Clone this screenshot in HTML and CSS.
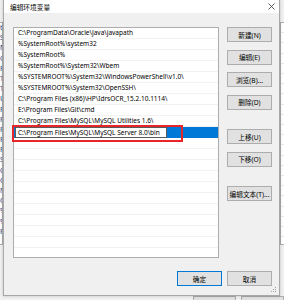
FILE: index.html
```html
<!DOCTYPE html>
<html lang="zh-CN">

<head>
    <meta charset="UTF-8">
    <meta name="viewport" content="width=device-width, initial-scale=1.0">
    <title>编辑环境变量</title>
    <link rel="stylesheet" href="styles.css">
</head>

<body>

    <!-- window behind the dialog, only its edges show -->
    <div class="backwin">
        <div class="back-top">
            <div class="back-list">
                <div>t</div>
                <div>S</div>
                <div>M</div>
                <div>O</div>
                <div>F</div>
                <div>T</div>
                <div>T</div>
                <div>U</div>
                <div>P</div>
                <div>P</div>
                <div>P</div>
                <div>P</div>
                <div>F</div>
                <div>S</div>
                <div>C</div>
                <div>O</div>
                <div>N</div>
                <div>O</div>
                <div>%</div>
                <div>%</div>
                <div>F</div>
            </div>
            <div class="back-list right"></div>
        </div>
        <div class="back-buttons">
            <span class="back-btn"></span>
            <span class="back-btn"></span>
        </div>
    </div>

    <div class="dialog">
        <div class="titlebar">
            <span class="title">编辑环境变量</span>
            <svg class="close" width="7" height="7" viewBox="0 0 7 7">
                <path d="M0.5 0.5 L6.5 6.5 M6.5 0.5 L0.5 6.5" stroke="#333" stroke-width="0.8" fill="none" />
            </svg>
        </div>
        <div class="body">
            <div class="main">
                <div class="list">
                    <div class="row">C:\ProgramData\Oracle\Java\javapath</div>
                    <div class="row">%SystemRoot%\system32</div>
                    <div class="row">%SystemRoot%</div>
                    <div class="row">%SystemRoot%\System32\Wbem</div>
                    <div class="row">%SYSTEMROOT%\System32\WindowsPowerShell\v1.0\</div>
                    <div class="row">%SYSTEMROOT%\System32\OpenSSH\</div>
                    <div class="row">C:\Program Files (x86)\HP\IdrsOCR_15.2.10.1114\</div>
                    <div class="row">E:\Program Files\Git\cmd</div>
                    <div class="row">C:\Program Files\MySQL\MySQL Utilities 1.6\</div>
                    <div class="row selected"><span class="edit">C:\Program Files\MySQL\MySQL Server 8.0\bin</span></div>
                    <div class="row"></div>
                    <div class="row"></div>
                    <div class="row"></div>
                    <div class="row"></div>
                    <div class="row"></div>
                    <div class="row"></div>
                    <div class="row"></div>
                    <div class="row"></div>
                    <div class="row"></div>
                    <div class="row"></div>
                    <div class="row"></div>
                </div>
                <div class="buttons">
                    <button class="btn">新建(N)</button>
                    <button class="btn">编辑(E)</button>
                    <button class="btn">浏览(B)...</button>
                    <button class="btn">删除(D)</button>
                    <button class="btn sep">上移(U)</button>
                    <button class="btn">下移(O)</button>
                    <button class="btn sep">编辑文本(T)...</button>
                </div>
            </div>
            <div class="footer">
                <button class="btn default">确定</button>
                <button class="btn">取消</button>
            </div>
        </div>
        <svg class="grip" width="6" height="6" viewBox="0 0 6 6">
            <rect x="4" y="0" width="1" height="1" fill="#a0a0a0" />
            <rect x="2" y="2" width="1" height="1" fill="#a0a0a0" />
            <rect x="4" y="2" width="1" height="1" fill="#a0a0a0" />
            <rect x="0" y="4" width="1" height="1" fill="#a0a0a0" />
            <rect x="2" y="4" width="1" height="1" fill="#a0a0a0" />
            <rect x="4" y="4" width="1" height="1" fill="#a0a0a0" />
        </svg>
    </div>

    <!-- red annotation box -->
    <div class="mark"></div>

</body>

</html>
```

FILE: styles.css
```css
* {
    box-sizing: border-box;
}

html,
body {
    margin: 0;
    padding: 0;
}

body {
    width: 284px;
    height: 300px;
    position: relative;
    overflow: hidden;
    background-color: #f0f0f0;
    font-family: "Noto Sans", "Noto Sans CJK SC", sans-serif;
    font-size: 6.5px;
    color: #000;
}

.backwin {
    position: absolute;
    left: 0;
    top: 0;
    width: 284px;
    height: 300px;
    overflow: hidden;
    background-color: #f0f0f0;
}

.back-top {
    display: flex;
    justify-content: space-between;
    margin: 22px 0 0 -10px;
    height: 223px;
}

.back-list {
    width: 13px;
    height: 223px;
    overflow: hidden;
    background-color: #fff;
    border: 1px solid #adadad;
}

.back-list div {
    height: 10.2px;
    line-height: 10px;
    padding-left: 9px;
    color: #1d3f8a;
    font-size: 7px;
}

.back-list.right {
    width: 4px;
    border-right: 0;
    background: repeating-linear-gradient(to bottom, #fff 0, #fff 9.2px, #ececec 9.2px, #ececec 10.2px);
}

.back-buttons {
    display: flex;
    gap: 5px;
    margin: 51px 0 0 193px;
}

.back-btn {
    width: 44px;
    height: 15px;
    background-color: #e1e1e1;
    border: 1px solid #adadad;
}

.dialog {
    position: absolute;
    left: 3px;
    top: 0;
    width: 277px;
    height: 296px;
    background-color: #f0f0f0;
    border: 1px solid #a8a8a8;
    border-top: 0;
    display: flex;
    flex-direction: column;
    box-shadow: 0 0 3px rgba(0, 0, 0, 0.2);
}

.titlebar {
    height: 14px;
    background-color: #fff;
    display: flex;
    align-items: center;
    justify-content: space-between;
    padding: 0 4px 0 6px;
}

.title {
    font-size: 6.7px;
    color: #000;
}

.body {
    flex: 1;
    display: flex;
    flex-direction: column;
    padding: 14px 7px 9px 9px;
}

.main {
    display: flex;
    gap: 8px;
    height: 231px;
}

.list {
    width: 206px;
    height: 231px;
    background-color: #fff;
    border: 1px solid #adadad;
    overflow: hidden;
}

.row {
    height: 11px;
    line-height: 10px;
    padding-left: 4px;
    border-bottom: 1px solid #f2f2f2;
    white-space: nowrap;
    overflow: hidden;
}

.row.selected {
    background-color: #0078d7;
    padding-left: 1px;
    border-bottom: 0;
}

.edit {
    display: block;
    width: 152px;
    height: 11px;
    line-height: 9px;
    padding-left: 2px;
    background-color: #fff;
    border: 1px solid #5a5a5a;
    overflow: hidden;
}

.buttons {
    display: flex;
    flex-direction: column;
    gap: 7.5px;
    width: 45px;
}

.btn {
    width: 45px;
    height: 15px;
    padding: 0;
    margin: 0;
    background-color: #e1e1e1;
    border: 1px solid #adadad;
    font-family: inherit;
    font-size: 6.7px;
    color: #000;
    display: flex;
    align-items: center;
    justify-content: center;
    white-space: nowrap;
}

.btn.sep {
    margin-top: 12px;
}

.footer {
    margin-top: 13px;
    display: flex;
    justify-content: flex-end;
    gap: 5px;
}

.btn.default {
    border-color: #0078d7;
}

.grip {
    position: absolute;
    right: 2px;
    bottom: 2px;
}

.mark {
    position: absolute;
    left: 12px;
    top: 125px;
    width: 171px;
    height: 17px;
    border: 2px solid #e8262a;
}
```
